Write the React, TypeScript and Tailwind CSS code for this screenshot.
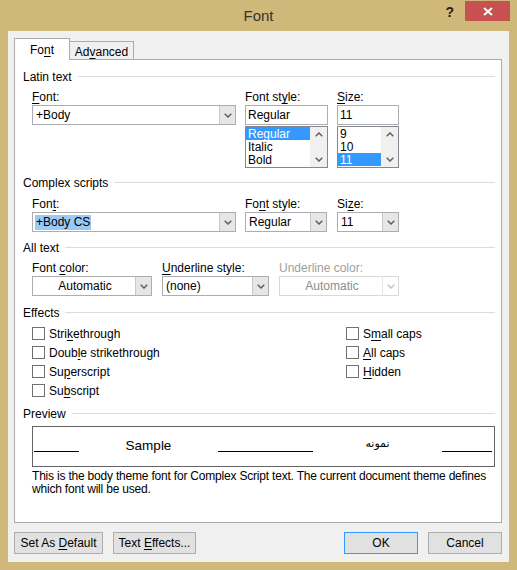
import React from 'react'

const font = { fontFamily: '"Liberation Sans", Arial, sans-serif' }

function Chevron({ up = false, color = '#606060' }: { up?: boolean; color?: string }) {
  return (
    <svg width="8" height="5" viewBox="0 0 8 5">
      <polyline
        points={up ? '0.7,4.3 4,1 7.3,4.3' : '0.7,0.7 4,4 7.3,0.7'}
        fill="none"
        stroke={color}
        strokeWidth="1.5"
      />
    </svg>
  )
}

function U({ children }: { children: React.ReactNode }) {
  return <span className="underline underline-offset-[2px]">{children}</span>
}

function Header({ title }: { title: string }) {
  return (
    <div className="ml-[8px] mr-[6px] flex h-[14px] items-center">
      <span className="pt-[2px] leading-[14px] text-black">{title}</span>
      <div className="ml-[6px] h-px flex-1 bg-[#DCDCDC]" />
    </div>
  )
}

function Label({ children, disabled }: { children: React.ReactNode; disabled?: boolean }) {
  return (
    <div className={`h-[15px] pt-[1px] leading-[15px] ${disabled ? 'text-[#A0A0A0]' : 'text-black'}`}>
      {children}
    </div>
  )
}

function Combo({
  value,
  center,
  disabled,
  selected,
}: {
  value: string
  center?: boolean
  disabled?: boolean
  selected?: boolean
}) {
  return (
    <div
      className={`mt-[1px] flex h-[20px] border bg-white ${
        disabled ? 'border-[#D9D9D9]' : 'border-[#ABADB3]'
      }`}
    >
      <div
        className={`flex flex-1 items-center pl-[2px] ${center ? 'justify-center' : ''} ${
          disabled ? 'text-[#8C8C8C]' : 'text-black'
        }`}
      >
        <span className={`px-[1px] leading-[15px] ${selected ? 'bg-[#99C9F5]' : ''}`}>{value}</span>
      </div>
      <div
        className={`flex w-[16px] items-center justify-center border-l ${
          disabled ? 'border-[#E5E5E5] bg-white' : 'border-[#C8C8C8] bg-[#E6E6E6]'
        }`}
      >
        <Chevron color={disabled ? '#C4C4C4' : '#606060'} />
      </div>
    </div>
  )
}

function ListBox({ items, sel }: { items: string[]; sel: number }) {
  return (
    <div className="mt-[1px] flex h-[42px] border border-[#828790] bg-white">
      <div className="flex-1">
        {items.map((it, i) => (
          <div
            key={it}
            className={`h-[13px] pl-[2px] leading-[14px] ${
              i === sel ? 'bg-[#3399FF] text-white' : 'text-black'
            }`}
          >
            {it}
          </div>
        ))}
      </div>
      <div className="flex w-[17px] flex-col items-center justify-between bg-[#F0F0F0] py-[5px]">
        <Chevron up />
        <Chevron />
      </div>
    </div>
  )
}

function TextBox({ value }: { value: string }) {
  return (
    <div className="mt-[1px] flex h-[20px] items-center border border-[#ABADB3] bg-white pl-[2px] text-black">
      <span className="leading-[15px]">{value}</span>
    </div>
  )
}

function Check({ children }: { children: React.ReactNode }) {
  return (
    <div className="flex h-[19px] items-center">
      <div className="h-[13px] w-[13px] border border-[#707070] bg-white" />
      <span className="ml-[4px] pt-[1px] leading-[15px] text-black">{children}</span>
    </div>
  )
}

function Button({ children, primary, className }: { children: React.ReactNode; primary?: boolean; className: string }) {
  return (
    <div
      className={`flex h-[22px] items-center justify-center border bg-[#E1E1E1] text-black ${
        primary ? 'border-[#3399FF]' : 'border-[#ADADAD]'
      } ${className}`}
    >
      <span className="whitespace-pre leading-[15px]">{children}</span>
    </div>
  )
}

export default function App() {
  return (
    <div className="h-[570px] w-[517px] bg-[#CFB87A] text-[12px]" style={font}>
      {/* title bar */}
      <div className="relative flex h-[31px] items-center justify-center">
        <span className="text-[15px] leading-[18px] text-[#333333]">Font</span>
        <div className="absolute right-[7px] top-[1px] flex items-start">
          <span className="mr-[11px] mt-[3px] text-[14px] font-bold leading-[16px] text-[#222222]">?</span>
          <div className="flex h-[20px] w-[45px] items-center justify-center bg-[#C75050]">
            <svg width="10" height="9" viewBox="0 0 10 9">
              <path d="M1 1 L9 8 M9 1 L1 8" stroke="white" strokeWidth="2" />
            </svg>
          </div>
        </div>
      </div>

      {/* client area */}
      <div className="mx-[8px] h-[531px] bg-[#F0F0F0] pl-[6px] pr-[7px] pt-[7px]">
        {/* tabs */}
        <div className="flex h-[21px] items-end">
          <div className="relative z-10 -mb-px flex h-[22px] w-[56px] items-center justify-center border-x border-t border-[#ACACAC] bg-white text-black">
            <span>
              Fo<U>n</U>t
            </span>
          </div>
          <div className="flex h-[18px] w-[64px] items-center justify-center border-r border-t border-[#ACACAC] bg-[#F0F0F0] pt-[2px] text-black">
            <span>
              Ad<U>v</U>anced
            </span>
          </div>
        </div>

        {/* panel */}
        <div className="h-[464px] border border-[#ACACAC] bg-white">
          {/* Latin text */}
          <div className="mt-[9px]">
            <Header title="Latin text" />
          </div>
          <div className="mt-[6px] flex pl-[17px]">
            <div className="w-[204px]">
              <Label>
                <U>F</U>ont:
              </Label>
              <Combo value="+Body" />
            </div>
            <div className="ml-[9px] w-[83px]">
              <Label>
                Font st<U>y</U>le:
              </Label>
              <TextBox value="Regular" />
              <ListBox items={['Regular', 'Italic', 'Bold']} sel={0} />
            </div>
            <div className="ml-[9px] w-[62px]">
              <Label>
                <U>S</U>ize:
              </Label>
              <TextBox value="11" />
              <ListBox items={['9', '10', '11']} sel={2} />
            </div>
          </div>

          {/* Complex scripts */}
          <div className="mt-[7px]">
            <Header title="Complex scripts" />
          </div>
          <div className="mt-[7px] flex pl-[17px]">
            <div className="w-[204px]">
              <Label>
                Fon<U>t</U>:
              </Label>
              <Combo value="+Body CS" selected />
            </div>
            <div className="ml-[9px] w-[82px]">
              <Label>
                Fo<U>n</U>t style:
              </Label>
              <Combo value="Regular" />
            </div>
            <div className="ml-[10px] w-[62px]">
              <Label>
                Si<U>z</U>e:
              </Label>
              <Combo value="11" />
            </div>
          </div>

          {/* All text */}
          <div className="mt-[8px]">
            <Header title="All text" />
          </div>
          <div className="mt-[6px] flex pl-[17px]">
            <div className="w-[120px]">
              <Label>
                Font <U>c</U>olor:
              </Label>
              <Combo value="Automatic" center />
            </div>
            <div className="ml-[10px] w-[107px]">
              <Label>
                <U>U</U>nderline style:
              </Label>
              <Combo value="(none)" />
            </div>
            <div className="ml-[10px] w-[120px]">
              <Label disabled>Underline color:</Label>
              <Combo value="Automatic" center disabled />
            </div>
          </div>

          {/* Effects */}
          <div className="mt-[9px]">
            <Header title="Effects" />
          </div>
          <div className="mt-[5px] flex pl-[17px]">
            <div className="w-[314px]">
              <Check>
                Stri<U>k</U>ethrough
              </Check>
              <Check>
                Doub<U>l</U>e strikethrough
              </Check>
              <Check>
                Su<U>p</U>erscript
              </Check>
              <Check>
                Su<U>b</U>script
              </Check>
            </div>
            <div>
              <Check>
                S<U>m</U>all caps
              </Check>
              <Check>
                <U>A</U>ll caps
              </Check>
              <Check>
                <U>H</U>idden
              </Check>
            </div>
          </div>

          {/* Preview */}
          <div className="mt-[6px]">
            <Header title="Preview" />
          </div>
          <div className="ml-[17px] mr-[6px] mt-[6px] flex h-[41px] border border-[#646464] bg-white">
            <div className="ml-[1px] h-[25px] w-[45px] border-b border-black" />
            <div className="flex w-[139px] justify-center">
              <span className="mt-[11px] text-[13.5px] leading-[16px] text-black">Sample</span>
            </div>
            <div className="h-[25px] w-[95px] border-b border-black" />
            <div className="flex w-[129px] justify-center">
              <span
                className="mt-[10px] text-[11px] leading-[14px] text-black"
                style={{ fontFamily: '"DejaVu Sans", sans-serif' }}
              >
                نمونه
              </span>
            </div>
            <div className="h-[25px] w-[50px] border-b border-black" />
          </div>
          <div className="ml-[17px] mt-[3px] leading-[13px] tracking-[-0.2px] text-black">
            <div className="whitespace-nowrap">
              This is the body theme font for Complex Script text. The current document theme defines
            </div>
            <div className="whitespace-nowrap">which font will be used.</div>
          </div>
        </div>

        {/* buttons */}
        <div className="mt-[9px] flex">
          <Button className="w-[89px]">
            Set As <U>D</U>efault
          </Button>
          <Button className="ml-[10px] w-[83px]">
            Text <U>E</U>ffects...
          </Button>
          <div className="flex-1" />
          <Button primary className="w-[74px]">
            OK
          </Button>
          <Button className="ml-[10px] w-[74px]">
            Cancel
          </Button>
        </div>
      </div>
    </div>
  )
}
